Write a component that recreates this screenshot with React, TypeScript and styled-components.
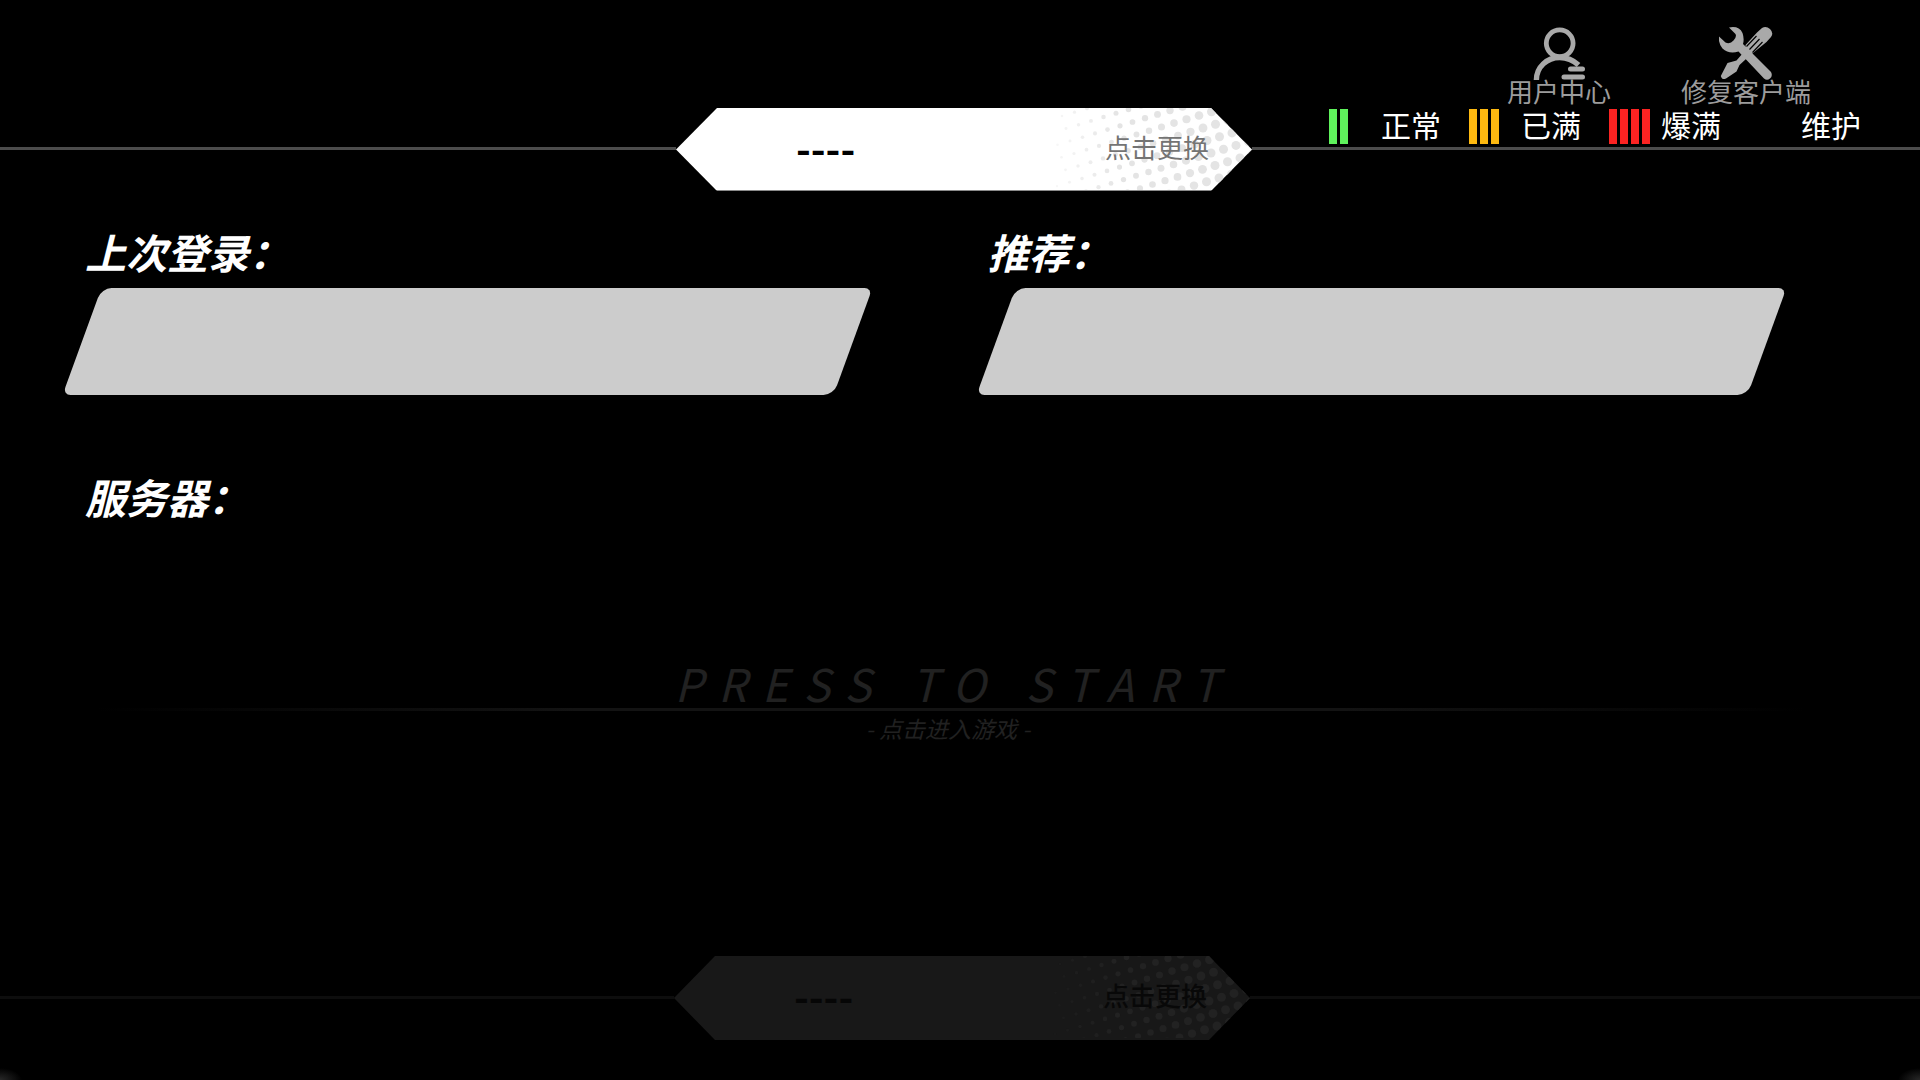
import React from "react";
import styled, { createGlobalStyle } from "styled-components";

const GlobalStyle = createGlobalStyle`
  *, *::before, *::after { box-sizing: border-box; }
  html, body { margin: 0; background: #000; }
  body { font-family: "Noto Sans CJK SC", "Noto Sans", sans-serif; }
  h2, p, ul { margin: 0; padding: 0; font: inherit; }
  button { margin: 0; padding: 0; border: 0; background: none; color: inherit; font: inherit; cursor: pointer; }
`;

const Page = styled.main`
  display: flex;
  flex-direction: column;
  min-height: 100vh;
  padding-bottom: 40px;
  background:
    radial-gradient(ellipse 22px 12px at 0 100%, #282828, transparent),
    radial-gradient(ellipse 22px 12px at 100% 100%, #282828, transparent),
    #000;
`;

const Toolbar = styled.nav`
  display: flex;
  justify-content: flex-end;
  gap: 70px;
  height: 108px;
  padding: 26px 109px 0 0;
`;

const ToolButton = styled.button`
  display: flex;
  flex-direction: column;
  align-items: center;
  color: #a9a9a9;
  font-size: 26px;
  line-height: 22px;
`;

const ToolLabel = styled.span`
  color: #9c9c9c;
`;

const ToolIcon = styled.svg`
  display: block;
  width: 54px;
  height: 54px;
`;

const BannerRow = styled.div<{ $bottom?: boolean }>`
  display: grid;
  grid-template-columns: ${(p) => (p.$bottom ? "674fr 576px 670fr" : "676fr 576px 668fr")};
  align-items: start;
  margin-top: ${(p) => (p.$bottom ? "auto" : "0")};
`;

const Rail = styled.div<{ $dim?: boolean }>`
  height: ${(p) => (p.$dim ? "43px" : "42px")};
  border-bottom: 3px solid ${(p) => (p.$dim ? "#0d0d0d" : "#4c4c4c")};
`;

const ServerBanner = styled.button<{ $dim?: boolean }>`
  position: relative;
  display: flex;
  align-items: center;
  justify-content: space-between;
  height: ${(p) => (p.$dim ? "84px" : "83px")};
  padding: 0 43px 6px 120px;
  background: ${(p) => (p.$dim ? "#181818" : "linear-gradient(#fff 82px, #8a8a8a 82px)")};
  color: ${(p) => (p.$dim ? "#060606" : "#000")};
  clip-path: polygon(0 50%, 41px 0, calc(100% - 41px) 0, 100% 50%, calc(100% - 41px) 100%, 41px 100%);
`;

const Dots = styled.svg<{ $dim?: boolean }>`
  position: absolute;
  top: 0;
  right: 0;
  width: 200px;
  height: 82px;
  fill: ${(p) => (p.$dim ? "#222" : "#e4e4e4")};
`;

const ServerName = styled.span`
  position: relative;
  font-size: 40px;
  font-weight: 700;
  line-height: 60px;
`;

const ChangeLabel = styled.span<{ $dim?: boolean }>`
  position: relative;
  color: ${(p) => (p.$dim ? "#080808" : "#747474")};
  font-size: 26px;
  font-weight: ${(p) => (p.$dim ? 500 : 400)};
  line-height: 40px;
`;

const Legend = styled.ul`
  display: flex;
  justify-content: flex-end;
  gap: 28px;
  padding: 1px 59px 0 0;
  list-style: none;
`;

const LegendItem = styled.li`
  display: grid;
  grid-template-columns: 52px auto;
  color: #fff;
  font-size: 30px;
  line-height: 31px;
`;

const Bars = styled.span`
  display: flex;
  gap: 3px;
`;

const Bar = styled.span<{ $color: string }>`
  width: 8px;
  height: 35px;
  background: ${(p) => p.$color};
`;

const TitleRow = styled.div`
  display: grid;
  grid-template-columns: 1fr 1fr;
  gap: 122px;
  margin-top: 39px;
  padding: 0 152px 0 85px;
`;

const Title = styled.h2`
  color: #fff;
  font-size: 41px;
  font-style: italic;
  font-weight: 700;
  line-height: 42px;
`;

const SlotRow = styled.div`
  display: grid;
  grid-template-columns: 1fr 1fr;
  gap: 143px;
  margin: 16px 0 41px;
  padding: 0 153px 0 82px;
`;

const Slot = styled.button`
  height: 107px;
  border-radius: 10px 8px;
  background: #ccc;
  transform: skewX(-20deg);
`;

const Start = styled.button`
  display: flex;
  flex-direction: column;
  align-items: center;
  margin-top: 141px;
  color: #212121;
  font-style: italic;
`;

const StartTitle = styled.span`
  padding-right: 12px;
  font-size: 45px;
  line-height: 50px;
  letter-spacing: 15px;
`;

const StartRule = styled.span`
  align-self: stretch;
  height: 3px;
  background: linear-gradient(90deg, transparent 5%, #131313 30%, #131313 70%, transparent 94%);
`;

const StartHint = styled.span`
  padding-right: 24px;
  font-size: 23px;
  line-height: 34px;
`;

const LEVELS = [
  { label: "正常", color: "#5ff25c", bars: 2 },
  { label: "已满", color: "#fdb910", bars: 3 },
  { label: "爆满", color: "#fb2322", bars: 4 },
  { label: "维护", color: "#000", bars: 0 },
];

/* Slanted lattice whose dots grow towards the right tip of the banner. */
const DOTS: { x: number; y: number; r: number }[] = [];
for (let i = -8; i < 22; i++) {
  for (let j = -8; j < 16; j++) {
    const x = 10 + i * 12.5 + j * 4;
    const y = 8 - i * 3.8 + j * 12.5;
    if (x > 2 && x < 204 && y > -5 && y < 88) {
      DOTS.push({ x, y, r: Math.min(4.5, 1.1 + x * 0.022) });
    }
  }
}

function Banner({ dim }: { dim?: boolean }) {
  return (
    <ServerBanner type="button" $dim={dim}>
      <Dots $dim={dim} viewBox="0 0 200 82" aria-hidden="true">
        {DOTS.map((d, i) => (
          <circle key={i} cx={d.x} cy={d.y} r={d.r} opacity={Math.min(1, 0.25 + d.x / 90)} />
        ))}
      </Dots>
      <ServerName>----</ServerName>
      <ChangeLabel $dim={dim}>点击更换</ChangeLabel>
    </ServerBanner>
  );
}

function UserIcon() {
  return (
    <ToolIcon viewBox="0 0 54 54" fill="none" stroke="currentColor" aria-hidden="true">
      <circle cx="27.7" cy="17.3" r="13.4" strokeWidth="4.8" />
      <path d="M4.4 54 C4.4 41 15 31.5 27.7 31.5 C35 31.5 41 34 46.5 39" strokeWidth="5.4" />
      <path d="M38.5 43 H50.5 M32 51 H50.5" strokeWidth="5" strokeLinecap="round" />
    </ToolIcon>
  );
}

function RepairIcon() {
  return (
    <ToolIcon viewBox="0 0 54 54" fill="currentColor" aria-hidden="true">
      <path d="M10 1.5 Q20 -.5 23.5 7 Q25.5 13 24 18 L52 46 Q54 50 51 52.5 Q48 55 45 52.5 L19.5 25.5 Q10 28.5 3.5 22.5 Q-1 17 0 10.5 L6.5 16.5 Q11 18.5 14.5 14.5 Q18 11 16.5 8 Z" />
      <path d="M38 6.5 L43 2 Q47 -.5 51 3 Q55 7 52 11 L47.5 16 L34 27 L27 33 L20.5 39 L17.5 45.5 L7 52.5 Q3 54.5 1.8 50 L8.500 37 L17.5 34.5 L27 23.5 L26.5 19 Z" />
      <path d="M27.5 20.5 L37.5 10 M30.5 23.5 L40.5 13 M33.5 26.5 L43.5 16" stroke="#000" strokeWidth="1.2" />
    </ToolIcon>
  );
}

export default function App() {
  return (
    <Page lang="zh-CN">
      <GlobalStyle />
      <Toolbar>
        <ToolButton type="button">
          <UserIcon />
          <ToolLabel>用户中心</ToolLabel>
        </ToolButton>
        <ToolButton type="button">
          <RepairIcon />
          <ToolLabel>修复客户端</ToolLabel>
        </ToolButton>
      </Toolbar>
      <BannerRow>
        <Rail />
        <Banner />
        <Rail>
          <Legend>
            {LEVELS.map((level) => (
              <LegendItem key={level.label}>
                <Bars>
                  {Array.from({ length: level.bars }, (_, i) => (
                    <Bar key={i} $color={level.color} />
                  ))}
                </Bars>
                {level.label}
              </LegendItem>
            ))}
          </Legend>
        </Rail>
      </BannerRow>
      <TitleRow>
        <Title>上次登录：</Title>
        <Title>推荐：</Title>
      </TitleRow>
      <SlotRow>
        <Slot type="button" aria-label="上次登录" />
        <Slot type="button" aria-label="推荐" />
      </SlotRow>
      <TitleRow>
        <Title>服务器：</Title>
      </TitleRow>
      <Start type="button">
        <StartTitle>PRESS TO START</StartTitle>
        <StartRule />
        <StartHint>- 点击进入游戏 -</StartHint>
      </Start>
      <BannerRow $bottom>
        <Rail $dim />
        <Banner dim />
        <Rail $dim />
      </BannerRow>
    </Page>
  );
}
